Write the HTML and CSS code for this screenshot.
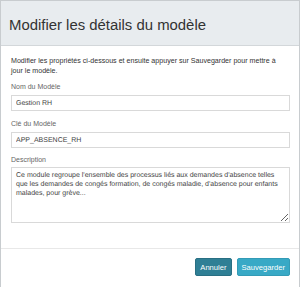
FILE: index.html
```html
<!DOCTYPE html>
<html lang="fr">
<head>
  <meta charset="UTF-8">
  <title>Modifier les détails du modèle</title>
  <link rel="stylesheet" href="styles.css">
</head>
<body>
  <div class="modal">
    <div class="modal-header">
      <h2>Modifier les détails du modèle</h2>
    </div>

    <div class="modal-body">
      <p class="intro">Modifier les propriétés ci-dessous et ensuite appuyer sur Sauvegarder pour mettre à jour le modèle.</p>

      <label>Nom du Modèle</label>
      <input type="text" class="first" value="Gestion RH">

      <label>Clé du Modèle</label>
      <input type="text" class="second" value="APP_ABSENCE_RH">

      <label>Description</label>
      <textarea rows="5">Ce module regroupe l'ensemble des processus liés aux demandes d'absence telles que les demandes de congés formation, de congés maladie, d'absence pour enfants malades, pour grève...</textarea>
    </div>

    <div class="modal-footer">
      <button class="btn btn-cancel">Annuler</button>
      <button class="btn btn-save">Sauvegarder</button>
    </div>
  </div>
</body>
</html>
```

FILE: styles.css
```css
body {
  margin: 0;
  font-family: "Liberation Sans", Arial, sans-serif;
  background: white;
  color: #333;
}

.modal {
  border: 1px solid #c8cccf;
  border-bottom: none;
  background: white;
  height: 300px;
}

.modal-header {
  background: #e8ecef;
  border-bottom: 1px solid #d3d7da;
  height: 45px;
  display: flex;
  align-items: center;
  padding: 3px 8px 0;
  box-sizing: border-box;
}

.modal-header h2 {
  margin: 0;
  font-size: 14.9px;
  font-weight: normal;
  color: #333;
}

.modal-body {
  padding: 10px 9px 25px 10px;
}

.intro {
  margin: 0 8px 6px 0;
  font-size: 7.1px;
  line-height: 10px;
  color: #333;
}

label {
  display: block;
  font-size: 7px;
  line-height: 10px;
  color: #666;
  margin-bottom: 3px;
}

input, textarea {
  display: block;
  box-sizing: border-box;
  width: 100%;
  border: 1px solid #d9d9d9;
  font-family: "Liberation Sans", Arial, sans-serif;
  font-size: 7px;
  color: #444;
  text-rendering: geometricPrecision;
}

input {
  height: 16px;
  line-height: 14px;
  padding: 0 4px;
  margin-bottom: 8px;
}

input.second {
  margin-top: 1px;
  margin-bottom: 7px;
}

textarea {
  height: 56px;
  line-height: 9px;
  padding: 3px 10px 3px 4px;
  margin-top: -1px;
  resize: vertical;
}

.modal-footer {
  border-top: 1px solid #e8e8e8;
  display: flex;
  justify-content: flex-end;
  gap: 5px;
  padding: 9px 9px;
}

.btn {
  border: 1px solid transparent;
  border-radius: 2px;
  color: white;
  font-family: "Liberation Sans", Arial, sans-serif;
  font-size: 7.6px;
  height: 18px;
  padding: 0 4px;
  cursor: pointer;
}

.btn-cancel {
  background: #2f7f95;
  border-color: #296f83;
}

.btn-save {
  background: #38a9c6;
  border-color: #339bb6;
}
```
